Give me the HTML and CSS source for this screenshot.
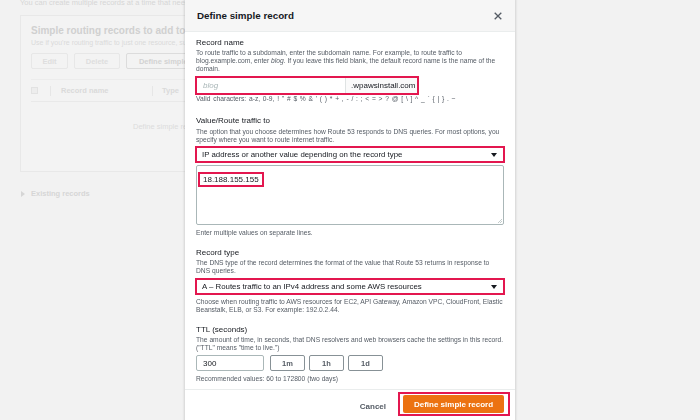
FILE: index.html
```html
<!DOCTYPE html>
<html lang="en">
<head>
<meta charset="utf-8">
<title>Define simple record</title>
<link rel="stylesheet" href="styles.css">
</head>
<body>
<div class="page">
  <p class="intro">You can create multiple records at a time that need the same routing policy.</p>
  <section class="card">
    <h2 class="card-title">Simple routing records to add to wpawsinstall.com</h2>
    <p class="card-sub">Use if you're routing traffic to just one resource, such as a web server for your domain.</p>
    <div class="card-actions">
      <span class="bg-btn bg-btn-edit">Edit</span>
      <span class="bg-btn bg-btn-delete">Delete</span>
      <span class="bg-btn bg-btn-main">Define simple record</span>
    </div>
    <div class="table-head">
      <span class="bg-check"></span>
      <span class="col-sep"></span>
      <span class="col col-name">Record name</span>
      <span class="col-sep"></span>
      <span class="col col-type">Type</span>
    </div>
    <p class="card-empty">Define simple records to add them here.</p>
  </section>
  <div class="existing"><span class="caret"></span>Existing records</div>
</div>

<div class="overlay">
  <div class="modal">
    <header class="modal-head">
      <h1 class="modal-title">Define simple record</h1>
      <span class="close">
        <svg width="8" height="8" viewBox="0 0 8 8"><path d="M0.7 0.7 L7.3 7.3 M7.3 0.7 L0.7 7.3" stroke="#545b64" stroke-width="1.3" fill="none"/></svg>
      </span>
    </header>

    <div class="modal-body">
      <div class="field field-first">
        <div class="label">Record name</div>
        <p class="desc">To route traffic to a subdomain, enter the subdomain name. For example, to route traffic to<br>blog.example.com, enter <i>blog</i>. If you leave this field blank, the default record name is the name of the<br>domain.</p>
        <div class="name-input">
          <span class="ph">blog</span>
          <span class="suffix">.wpawsinstall.com</span>
        </div>
        <p class="hint hint-valid">Valid characters: a-z, 0-9, ! " # $ % &amp; ' ( ) * + , - / : ; &lt; = &gt; ? @ [ \ ] ^ _ ` { | } . ~</p>
      </div>

      <div class="field">
        <div class="label">Value/Route traffic to</div>
        <p class="desc desc-2">The option that you choose determines how Route 53 responds to DNS queries. For most options, you<br>specify where you want to route internet traffic.</p>
        <div class="select select-value">
          <span>IP address or another value depending on the record type</span>
          <svg class="tri" width="6" height="4" viewBox="0 0 6 4"><polygon points="0,0 6,0 3,4" fill="#16191f"/></svg>
        </div>
        <div class="textarea">
          <span class="ip">18.188.155.155</span>
          <svg class="grip" width="5" height="5" viewBox="0 0 5 5"><path d="M5 1 L1 5 M5 3 L3 5" stroke="#aab7b8" stroke-width="0.7"/></svg>
        </div>
        <p class="hint hint-gap">Enter multiple values on separate lines.</p>
      </div>

      <div class="field">
        <div class="label">Record type</div>
        <p class="desc">The DNS type of the record determines the format of the value that Route 53 returns in response to<br>DNS queries.</p>
        <div class="select select-type">
          <span>A – Routes traffic to an IPv4 address and some AWS resources</span>
          <svg class="tri" width="6" height="4" viewBox="0 0 6 4"><polygon points="0,0 6,0 3,4" fill="#16191f"/></svg>
        </div>
        <p class="hint hint-help">Choose when routing traffic to AWS resources for EC2, API Gateway, Amazon VPC, CloudFront, Elastic<br>Beanstalk, ELB, or S3. For example: 192.0.2.44.</p>
      </div>

      <div class="field field-last">
        <div class="label">TTL (seconds)</div>
        <p class="desc">The amount of time, in seconds, that DNS resolvers and web browsers cache the settings in this record.<br>("TTL" means "time to live.")</p>
        <div class="ttl-row">
          <span class="ttl-input">300</span>
          <span class="ttl-btn">1m</span>
          <span class="ttl-btn">1h</span>
          <span class="ttl-btn">1d</span>
        </div>
        <p class="hint hint-gap">Recommended values: 60 to 172800 (two days)</p>
      </div>
    </div>

    <footer class="modal-foot">
      <span class="cancel">Cancel</span>
      <span class="primary-wrap"><span class="primary">Define simple record</span></span>
    </footer>
  </div>
</div>
</body>
</html>
```

FILE: styles.css
```css
* { box-sizing: border-box; }

html, body {
  margin: 0;
  padding: 0;
  height: 100%;
  overflow: hidden;
}

body {
  background: #f2f2f2;
  font-family: "Liberation Sans", Arial, sans-serif;
  color: #16191f;
}

p { margin: 0; }

/* ---------- faded background page ---------- */
.page {
  padding-left: 20px;
}

.intro {
  margin-top: -2px;
  font-size: 7.5px;
  line-height: 10px;
  color: #d6d6d6;
  white-space: nowrap;
}

.card {
  margin-top: 7px;
  width: 480px;
  height: 157px;
  border: 1px solid #e8e8e8;
  background: #f3f3f3;
  padding: 9px 10px 0 10px;
}

.card-title {
  margin: 0;
  font-size: 10px;
  line-height: 12px;
  font-weight: bold;
  color: #d0d0d0;
  white-space: nowrap;
}

.card-sub {
  margin-top: 2px;
  font-size: 7px;
  line-height: 8px;
  color: #dadada;
  white-space: nowrap;
}

.card-actions {
  margin-top: 6px;
  display: flex;
  gap: 6px;
}

.bg-btn {
  height: 16px;
  display: flex;
  align-items: center;
  justify-content: center;
  border: 1px solid #e7e7e7;
  border-radius: 2px;
  font-size: 7.5px;
  font-weight: bold;
  color: #dedede;
}
.bg-btn-edit { width: 37px; }
.bg-btn-delete { width: 46px; }
.bg-btn-main { width: 100px; border-color: #dcdcdc; color: #d2d2d2; }

.table-head {
  margin-top: 10px;
  height: 23px;
  border-top: 1px solid #ececec;
  border-bottom: 1px solid #e9e9e9;
  display: flex;
  align-items: center;
}

.bg-check {
  width: 7px;
  height: 7px;
  border: 1px solid #e2e2e2;
  background: #ededed;
  margin-right: 12px;
}

.col-sep {
  width: 1px;
  height: 10px;
  background: #e6e6e6;
}

.col {
  font-size: 7.5px;
  font-weight: bold;
  color: #dadada;
}
.col-name { margin-left: 10px; width: 91px; }
.col-type { margin-left: 9px; }

.card-empty {
  margin-top: 20px;
  padding-left: 102px;
  font-size: 7.5px;
  line-height: 10px;
  color: #dcdcdc;
  white-space: nowrap;
}

.existing {
  margin-top: 17px;
  display: flex;
  align-items: center;
  font-size: 7.5px;
  line-height: 10px;
  font-weight: bold;
  color: #d6d6d6;
}

.caret {
  width: 0;
  height: 0;
  border-top: 3px solid transparent;
  border-bottom: 3px solid transparent;
  border-left: 4px solid #d6d6d6;
  margin: 0 6px 0 1px;
}

/* ---------- modal ---------- */
.overlay {
  position: fixed;
  inset: 0;
  display: flex;
  justify-content: center;
  align-items: flex-start;
}

.modal {
  width: 330px;
  background: #ffffff;
  box-shadow: 0 0 2px 1px rgba(0, 0, 0, 0.13);
  display: flex;
  flex-direction: column;
}

.modal-head {
  height: 32px;
  background: #f6f6f6;
  border-bottom: 1px solid #eaeded;
  display: flex;
  align-items: center;
  justify-content: space-between;
  padding: 0 13px 0 12px;
}

.modal-title {
  margin: 0;
  font-size: 9.8px;
  font-weight: bold;
  color: #16191f;
}

.close {
  display: flex;
}

.modal-body {
  padding: 6px 10px 6px 10px;
}

.field { margin-bottom: 11px; }
.field-first { margin-bottom: 13px; }
.field-last { margin-bottom: 0; }

.label {
  font-size: 8px;
  line-height: 10px;
  color: #16191f;
  padding-left: 1px;
}

.desc, .hint {
  font-size: 6.7px;
  line-height: 8px;
  color: #545b64;
  padding-left: 1px;
  white-space: nowrap;
}

.desc { margin-top: 1px; }
.desc-2 { margin-top: 2px; }

.hint-valid { word-spacing: 0.9px; }
.hint-gap { margin-top: 4px; }
.hint-help { margin-top: 3px; }

/* annotated record name input */
.name-input {
  margin-top: 3px;
  width: 224px;
  height: 19px;
  border: 2px solid #e3174f;
  display: flex;
  font-size: 8px;
}

.ph {
  flex: 1;
  display: flex;
  align-items: center;
  padding-left: 6px;
  color: #aab7b8;
  font-style: italic;
}

.suffix {
  width: 72px;
  display: flex;
  align-items: center;
  padding-left: 5px;
  border-left: 1px solid #dfe3e3;
  background: #fafafa;
  color: #16191f;
}

.select {
  margin-top: 2px;
  height: 17px;
  border: 2px solid #e3174f;
  display: flex;
  align-items: center;
  justify-content: space-between;
  padding: 0 6px 0 5px;
  font-size: 7.85px;
  color: #16191f;
}

.select-type { margin-top: 3px; }

.tri { display: block; }

.textarea {
  position: relative;
  margin: 2px 0 0 1px;
  width: 308px;
  height: 60px;
  border: 1px solid #aab7b8;
  border-radius: 2px;
  padding: 2px 0 0 1px;
}

.ip {
  display: inline-block;
  border: 2px solid #e3174f;
  padding: 1px 3px 1px 3px;
  font-size: 8px;
  line-height: 9px;
  color: #16191f;
}

.grip {
  position: absolute;
  right: 1px;
  bottom: 1px;
}

.ttl-row {
  margin-top: 3px;
  padding-left: 1px;
  display: flex;
  gap: 4px;
  height: 16px;
}

.ttl-input {
  width: 68px;
  border: 1px solid #aab7b8;
  border-radius: 2px;
  display: flex;
  align-items: center;
  padding-left: 6px;
  font-size: 8px;
  color: #16191f;
  margin-right: 2px;
}

.ttl-btn {
  width: 35px;
  border: 1px solid #879196;
  border-radius: 2px;
  display: flex;
  align-items: center;
  justify-content: center;
  font-size: 7.5px;
  font-weight: bold;
  color: #545b64;
}

.modal-foot {
  border-top: 1px solid #eaeded;
  height: 36px;
  padding: 2px 5px 0 0;
  display: flex;
  justify-content: flex-end;
  align-items: flex-start;
}

.cancel {
  margin-top: 10px;
  margin-right: 12px;
  font-size: 8px;
  font-weight: bold;
  color: #545b64;
}

.primary-wrap {
  border: 2px solid #e3174f;
  padding: 1px 4px 1px 3px;
  display: flex;
}

.primary {
  width: 101px;
  height: 18px;
  background: #ec7211;
  border-radius: 2px;
  display: flex;
  align-items: center;
  justify-content: center;
  font-size: 8px;
  font-weight: bold;
  color: #ffffff;
}
```
